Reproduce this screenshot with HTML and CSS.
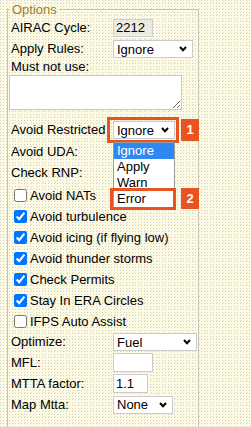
FILE: index.html
```html
<!DOCTYPE html>
<html>
<head>
<meta charset="utf-8">
<link rel="stylesheet" href="styles.css">
</head>
<body>
<fieldset class="options">
  <legend class="legend">Options</legend>
  <div class="row h21">
    <span class="lbl">AIRAC Cycle:</span>
    <input class="txt w40 h18 dis" type="text" value="2212" disabled>
  </div>
  <div class="row h22">
    <span class="lbl">Apply Rules:</span>
    <span class="sel w80"><select><option>Ignore</option></select><svg class="chev" width="8" height="6" viewBox="0 0 8 6"><polyline points="1,1 4,4.2 7,1" fill="none" stroke="#000" stroke-width="2"/></svg></span>
  </div>
  <div class="row h14">
    <span class="lbl wide">Must not use:</span>
  </div>
  <textarea class="notuse"></textarea>
  <div class="row h22">
    <span class="lbl">Avoid Restricted</span>
    <span class="sel w62 anchor"><select><option>Ignore</option></select><svg class="chev" width="8" height="6" viewBox="0 0 8 6"><polyline points="1,1 4,4.2 7,1" fill="none" stroke="#000" stroke-width="2"/></svg>
      <span class="hl hl1"></span>
      <span class="badge b1">1</span>
      <span class="droplist">
        <span class="item active">Ignore</span>
        <span class="item">Apply</span>
        <span class="item">Warn</span>
        <span class="item">Error</span>
      </span>
      <span class="hl hl2"></span>
      <span class="badge b2">2</span>
    </span>
  </div>
  <div class="row h22">
    <span class="lbl">Avoid UDA:</span>
  </div>
  <div class="row h20">
    <span class="lbl">Check RNP:</span>
  </div>
  <div class="checks">
    <label class="chk"><input type="checkbox">Avoid NATs</label>
    <label class="chk"><input type="checkbox" checked>Avoid turbulence</label>
    <label class="chk"><input type="checkbox" checked>Avoid icing (if flying low)</label>
    <label class="chk"><input type="checkbox" checked>Avoid thunder storms</label>
    <label class="chk"><input type="checkbox" checked>Check Permits</label>
    <label class="chk"><input type="checkbox" checked>Stay In ERA Circles</label>
    <label class="chk"><input type="checkbox">IFPS Auto Assist</label>
  </div>
  <div class="row h20">
    <span class="lbl">Optimize:</span>
    <span class="sel w84"><select><option>Fuel</option></select><svg class="chev" width="8" height="6" viewBox="0 0 8 6"><polyline points="1,1 4,4.2 7,1" fill="none" stroke="#000" stroke-width="2"/></svg></span>
  </div>
  <div class="row h21">
    <span class="lbl">MFL:</span>
    <input class="txt w40 h19" type="text" value="">
  </div>
  <div class="row h21">
    <span class="lbl">MTTA factor:</span>
    <input class="txt w35 h19" type="text" value="1.1">
  </div>
  <div class="row h21">
    <span class="lbl">Map Mtta:</span>
    <span class="sel w60"><select><option>None</option></select><svg class="chev" width="8" height="6" viewBox="0 0 8 6"><polyline points="1,1 4,4.2 7,1" fill="none" stroke="#000" stroke-width="2"/></svg></span>
  </div>
  <div class="row h21"></div>
</fieldset>
</body>
</html>
```
FILE: styles.css
```css
html, body {
  margin: 0;
  padding: 0;
}
body {
  width: 251px;
  height: 427px;
  overflow: hidden;
  font-family: "Liberation Sans", Arial, sans-serif;
  font-size: 13px;
  color: #000;
  background-color: #fdfbe2;
  background-image:
    conic-gradient(at 1px 1px, transparent 75%, #d2cdd6 0),
    conic-gradient(at 1px 1px, transparent 75%, #f2c4d2 0);
  background-size: 3px 3px, 6px 6px;
  background-position: 0 0, 1px 2px;
}
.options {
  margin: 2px 0 0 7px;
  width: 192px;
  box-sizing: border-box;
  border: 1px solid #c4c2bc;
  padding: 0 2px 0 3px;
  min-width: 0;
}
.legend {
  color: #a47a2c;
  padding: 0 2px;
  margin-left: -1px;
  line-height: 15px;
  font-size: 13px;
}
.row {
  display: grid;
  grid-template-columns: 102px auto;
  align-items: center;
  line-height: 14px;
}
.h14 { height: 14px; }
.h20 { height: 20px; }
.h21 { height: 21px; }
.h22 { height: 22px; }
.lbl { white-space: nowrap; }
.wide { grid-column: 1 / 3; }
.txt {
  box-sizing: border-box;
  border: 1px solid #cbcbcb;
  background: #fff;
  font-family: "Liberation Sans", Arial, sans-serif;
  font-size: 13px;
  color: #000;
  padding: 0 2px;
  margin: 0;
  justify-self: start;
}
.dis {
  background: rgba(228, 228, 228, 0.55);
  border-color: #cfcfcf;
  color: #000;
  -webkit-text-fill-color: #000;
  opacity: 1;
}
.w35 { width: 35px; }
.w40 { width: 40px; }
.h18 { height: 18px; }
.h19 { height: 19px; }
.sel {
  position: relative;
  display: block;
  height: 18px;
  justify-self: start;
}
.sel select {
  appearance: none;
  -webkit-appearance: none;
  box-sizing: border-box;
  width: 100%;
  height: 18px;
  border: 1px solid #cbcbcb;
  border-radius: 0;
  background: #fff;
  font-family: "Liberation Sans", Arial, sans-serif;
  font-size: 13px;
  color: #000;
  padding: 0 0 0 3px;
  margin: 0;
  display: block;
}
.chev {
  position: absolute;
  right: 6px;
  top: 6px;
  pointer-events: none;
}
.w60 { width: 60px; }
.w62 { width: 62px; }
.w80 { width: 80px; }
.w84 { width: 84px; }
.notuse {
  display: block;
  box-sizing: border-box;
  width: 173px;
  height: 35px;
  margin: 1px 0 9px -2px;
  border: 1px solid #c8c8c8;
  background: #fff;
  resize: both;
}
.checks {
  display: flex;
  flex-direction: column;
  margin-top: 2px;
}
.chk {
  display: flex;
  align-items: center;
  height: 21px;
  white-space: nowrap;
}
.chk input {
  width: 13px;
  height: 13px;
  margin: 0 3px 0 3px;
}
.anchor { z-index: 2; }
.hl {
  position: absolute;
  box-sizing: border-box;
  border: 3px solid #e8531f;
  pointer-events: none;
}
.hl1 {
  left: -6px;
  top: -4px;
  width: 72px;
  height: 26px;
}
.hl2 {
  left: -3px;
  top: 67px;
  width: 66px;
  height: 22px;
  z-index: 3;
}
.badge {
  position: absolute;
  width: 18px;
  height: 22px;
  background: #e8531f;
  color: #fff;
  font-weight: bold;
  font-size: 13px;
  line-height: 22px;
  text-align: center;
}
.b1 { left: 68px; top: -2px; }
.b2 { left: 68px; top: 67px; height: 21px; line-height: 21px; }
.droplist {
  position: absolute;
  left: 0;
  top: 21px;
  width: 62px;
  box-sizing: border-box;
  border: 1px solid #9a9a9a;
  background: #fff;
  display: flex;
  flex-direction: column;
  padding-bottom: 1px;
}
.item {
  height: 16px;
  line-height: 16px;
  padding-left: 3px;
  color: #000;
}
.item.active {
  background: #2e88f2;
  color: #fff;
}
```
